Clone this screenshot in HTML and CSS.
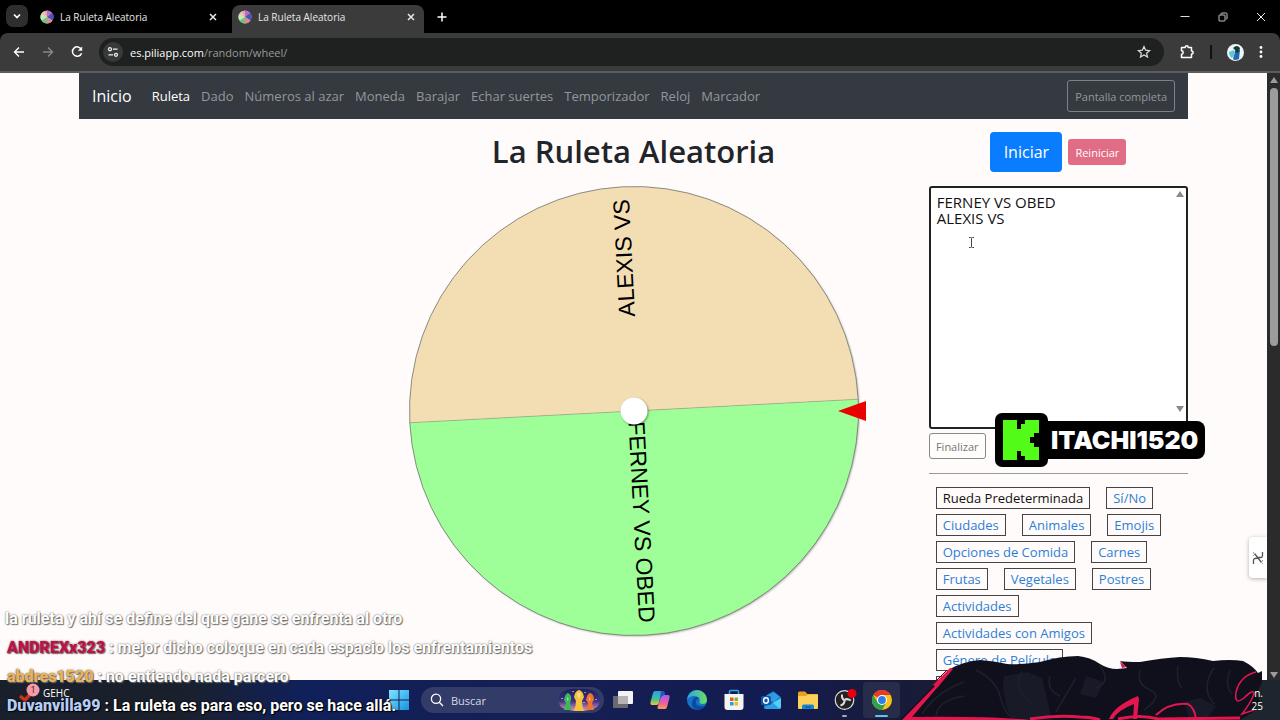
FILE: index.html
```
<!DOCTYPE html>
<html lang="es">
<head>
    <meta charset="UTF-8">
    <meta name="viewport" content="width=device-width, initial-scale=1.0">
    <title>La Ruleta Aleatoria</title>
    <link rel="stylesheet" href="styles.css">
</head>
<body>
    <svg width="0" height="0" class="defs">
        <symbol id="i-wheel" viewBox="0 0 14 14">
            <circle cx="7" cy="7" r="6.5" fill="#e9a0c8"/>
            <path d="M7 7 7 .5A6.5 6.5 0 0 1 12 3z" fill="#c06ac8"/>
            <path d="M7 7 12 3A6.5 6.5 0 0 1 12.5 10.500z" fill="#4454c0"/>
            <path d="M7 7 12.500 10.500A6.500 6.500 0 0 1 7 13.500z" fill="#e08a90"/>
            <path d="M7 7V13.500A6.500 6.500 0 0 1 1.500 10.500z" fill="#6cc47c"/>
            <path d="M7 7 1.500 10.500A6.500 6.500 0 0 1 1.500 3.500z" fill="#b8f0b0"/>
            <path d="M7 7 1.500 3.500A6.500 6.500 0 0 1 4 1.200z" fill="#e8c89c"/>
        </symbol>
        <symbol id="i-close" viewBox="0 0 10 10">
            <path d="M2 2 8 8M8 2 2 8" stroke="currentColor" stroke-width="1.500" fill="none"/>
        </symbol>
    </svg>

    <header class="tabstrip">
        <button class="tab-search" aria-label="Buscar pestañas">
            <svg width="10" height="10" viewBox="0 0 10 10"><path d="M2 3.500 5 6.500 8 3.500" fill="none" stroke="#fff" stroke-width="1.700"/></svg>
        </button>
        <div class="tab">
            <svg width="14" height="14"><use href="#i-wheel"/></svg>
            <span>La Ruleta Aleatoria</span>
            <button aria-label="Cerrar"><svg width="10" height="10"><use href="#i-close"/></svg></button>
        </div>
        <div class="tab active">
            <svg width="14" height="14"><use href="#i-wheel"/></svg>
            <span>La Ruleta Aleatoria</span>
            <button aria-label="Cerrar"><svg width="10" height="10"><use href="#i-close"/></svg></button>
        </div>
        <button class="new-tab" aria-label="Nueva pestaña">
            <svg width="12" height="12" viewBox="0 0 12 12"><path d="M6 1.500V10.500M1.500 6H10.500" stroke="#fff" stroke-width="1.500"/></svg>
        </button>
        <div class="window-controls">
            <button aria-label="Minimizar"><svg width="10" height="10" viewBox="0 0 10 10"><path d="M.5 4.500H9.500" stroke="#ddd"/></svg></button>
            <button aria-label="Restaurar"><svg width="10" height="10" viewBox="0 0 10 10"><path d="M1 3.500Q1 3 1.500 3H6.500Q7 3 7 3.500V8.500Q7 9 6.500 9H1.500Q1 9 1 8.500zM3 2.500V2Q3 1 4 1H8Q9 1 9 2V6.500Q9 7 8 7" fill="none" stroke="#ddd" stroke-width=".9"/></svg></button>
            <button aria-label="Cerrar ventana"><svg width="10" height="10" viewBox="0 0 10 10"><path d="M1 1 9 9M9 1 1 9" stroke="#eee"/></svg></button>
        </div>
    </header>

    <div class="toolbar">
        <button aria-label="Atrás"><svg width="14" height="14" viewBox="0 0 14 14"><path d="M12 7H2.500M7 2.500 2.500 7 7 11.500" fill="none" stroke="#fff" stroke-width="1.400"/></svg></button>
        <button aria-label="Adelante"><svg width="14" height="14" viewBox="0 0 14 14"><path d="M2 7H11.500M7 2.500 11.500 7 7 11.500" fill="none" stroke="#888" stroke-width="1.400"/></svg></button>
        <button aria-label="Recargar"><svg width="14" height="14" viewBox="0 0 14 14"><path d="M11.300 4.300A4.700 4.700 0 1 0 11.600 8.200" fill="none" stroke="#fff" stroke-width="1.500"/><path d="M12.200 1.500V5.800H7.900z" fill="#fff"/></svg></button>
        <div class="address">
            <span class="site-info">
                <svg width="12" height="12" viewBox="0 0 12 12"><g fill="none" stroke="#eee" stroke-width="1.300"><circle cx="3" cy="3.200" r="1.500"/><path d="M6 3.200H10.500M1.500 8.800H6"/><circle cx="9" cy="8.800" r="1.500"/></g></svg>
            </span>
            <span class="url">es.piliapp.com<span>/random/wheel/</span></span>
            <svg width="14" height="14" viewBox="0 0 14 14"><path d="M7 1.500 8.600 5.200 12.600 5.600 9.600 8.200 10.500 12.100 7 10 3.500 12.100 4.400 8.200 1.400 5.600 5.400 5.200z" fill="none" stroke="#ddd" stroke-width="1.200"/></svg>
        </div>
        <button class="extensions" aria-label="Extensiones"><svg width="16" height="16" viewBox="0 0 16 16"><path d="M2.500 3.500H6.200Q6.200 1.800 7.700 1.800 9.200 1.800 9.200 3.500H12.500V7Q14.200 7 14.200 8.500 14.200 10 12.500 10V13.500H2.500V10.200Q4.200 10.200 4.200 8.500 4.200 6.800 2.500 6.800z" fill="none" stroke="#fff" stroke-width="1.500" stroke-linejoin="round"/></svg></button>
        <span class="divider"></span>
        <button class="profile" aria-label="Perfil"><svg width="17" height="17" viewBox="0 0 17 17"><circle cx="8.500" cy="8.500" r="8.500" fill="#eef8f8"/><path d="M8 7 13 6 12 15Q8 17 6 15z" fill="#2468b4"/><path d="M6 4Q10 0 13 4L12 8 9 9 8 6z" fill="#123b3a"/><path d="M2 8 7 6 8 10 5 14Q2 12 2 8z" fill="#62c4dc"/></svg></button>
        <button class="menu" aria-label="Menú"><svg width="4" height="14" viewBox="0 0 4 14" fill="#fff"><circle cx="2" cy="2.500" r="1.400"/><circle cx="2" cy="7" r="1.400"/><circle cx="2" cy="11.500" r="1.400"/></svg></button>
    </div>

    <div class="viewport">
        <div class="page">
            <div class="container">
                <nav class="navbar">
                    <a class="brand" href="#">Inicio</a>
                    <a class="current" href="#">Ruleta</a>
                    <a href="#">Dado</a>
                    <a href="#">Números al azar</a>
                    <a href="#">Moneda</a>
                    <a href="#">Barajar</a>
                    <a href="#">Echar suertes</a>
                    <a href="#">Temporizador</a>
                    <a href="#">Reloj</a>
                    <a href="#">Marcador</a>
                    <button class="fullscreen">Pantalla completa</button>
                </nav>

                <div class="row">
                    <main class="wheel-col">
                        <h1>La Ruleta Aleatoria</h1>
                        <svg class="wheel" viewBox="-225 -225 450 450">
                            <circle class="wheel-shadow" r="224"/>
                            <g transform="rotate(-3)">
                                <path d="M-224.500 0A224.500 224.500 0 0 1 224.500 0z" fill="#f3deb3"/>
                                <path d="M-224.500 0A224.500 224.500 0 0 0 224.500 0z" fill="#9eff98"/>
                                <path d="M-224.500 0H224.500" stroke="#9a9a80" stroke-width=".6"/>
                                <circle r="224.500" fill="none" stroke="#777" stroke-width=".8"/>
                                <text transform="rotate(-90)" x="212" y="6" text-anchor="end">ALEXIS VS</text>
                                <text transform="rotate(90)" x="212" y="6" text-anchor="end">FERNEY VS OBED</text>
                            </g>
                            <circle class="hub" r="13.500"/>
                            <path d="M204 0 232 -10V10z" fill="#ea0000"/>
                        </svg>
                    </main>

                    <aside class="side">
                        <div class="actions">
                            <button class="btn-start">Iniciar</button>
                            <button class="btn-reset">Reiniciar</button>
                        </div>
                        <div class="entries">
                            <textarea aria-label="Opciones" spellcheck="false">FERNEY VS OBED
ALEXIS VS</textarea>
                            <i class="arrow up"></i>
                            <i class="arrow down"></i>
                            <svg class="cursor" width="7" height="11" viewBox="0 0 7 11"><path d="M1 .5H2.500Q3.500 .5 3.500 1.500V9.500Q3.500 10.500 2.500 10.500H1M6 .5H4.500Q3.500 .5 3.500 1.500M3.500 9.500Q3.500 10.500 4.500 10.500H6" fill="none" stroke="#444"/></svg>
                        </div>
                        <button class="btn-finish">Finalizar</button>
                        <hr>
                        <div class="tags">
                            <a class="selected" href="#">Rueda Predeterminada</a>
                            <a href="#">Sí/No</a>
                            <a href="#">Ciudades</a>
                            <a href="#">Animales</a>
                            <a href="#">Emojis</a>
                            <a href="#">Opciones de Comida</a>
                            <a href="#">Carnes</a>
                            <a href="#">Frutas</a>
                            <a href="#">Vegetales</a>
                            <a href="#">Postres</a>
                            <a href="#">Actividades</a>
                            <a href="#">Actividades con Amigos</a>
                            <a href="#">Género de Película</a>
                            <span class="tag-next"></span>
                        </div>
                    </aside>
                </div>
            </div>
            <div class="side-widget">
                <svg width="12" height="16" viewBox="0 0 12 16"><path d="M1.500 14V10.500Q1.500 8.500 3 8.500 5 8.500 6 7.500H9Q10.500 7.500 10.500 5.500V2M2.500 3.500 9.500 12.500" fill="none" stroke="#555" stroke-width="1.300"/><path d="M1.500 2V6M10.500 10V14" stroke="#999" stroke-dasharray="1.500 1.500"/></svg>
            </div>
        </div>
        <div class="scrollbar">
            <i class="arrow up"></i>
            <span class="thumb"></span>
            <i class="arrow down"></i>
        </div>
    </div>

    <footer class="taskbar">
        <div class="weather">
            <svg width="24" height="20" viewBox="0 0 24 20"><path d="M2 13 7 17 18 5" fill="none" stroke="#c8351c" stroke-width="3.500"/><circle cx="15" cy="7" r="6.500" fill="#f79aaa"/><text x="15" y="10" text-anchor="middle">1</text></svg>
            <span>GEHC</span>
        </div>
        <div class="apps">
            <button class="start" aria-label="Inicio">
                <svg width="20" height="20" viewBox="0 0 20 20"><defs><linearGradient id="win" x1="0" y1="0" x2="1" y2="1"><stop offset="0" stop-color="#7fe3ff"/><stop offset="1" stop-color="#1593e0"/></linearGradient></defs><path d="M0 0H9.500V9.500H0zM10.500 0H20V9.500H10.500zM0 10.500H9.500V20H0zM10.500 10.500H20V20H10.500z" fill="url(#win)"/></svg>
            </button>
            <label class="search">
                <svg width="14" height="14" viewBox="0 0 14 14"><circle cx="6" cy="5.800" r="4.600" fill="none" stroke="#fff" stroke-width="1.300"/><path d="M9.300 9.300 13 13" stroke="#fff" stroke-width="1.300"/></svg>
                <input type="text" placeholder="Buscar" aria-label="Buscar">
                <svg width="44" height="24" viewBox="0 0 44 24">
                    <defs><linearGradient id="night" x1="0" y1="0" x2="0" y2="1"><stop offset="0" stop-color="#1c2060"/><stop offset=".55" stop-color="#3d3080"/><stop offset="1" stop-color="#e79ac8"/></linearGradient></defs>
                    <path d="M4 5Q10 0 22 1 34 0 40 5 46 12 40 19 34 23 22 23 10 23 4 19-1 12 4 5z" fill="url(#night)"/>
                    <path d="M7 22Q8 18 9 15L7 12Q8 6 11 5 15 7 14 12L13 15Q14 19 15 22z" fill="#3fb85c"/>
                    <path d="M17 23Q19 17 19 13L17 9Q18 3 22 2 26 3 27 9L25 13Q25 18 27 23z" fill="#f5c33c"/>
                    <path d="M29 22Q31 18 31 15L29 12Q30 6 33 5 37 6 37 12L35 15Q36 19 37 22z" fill="#ee7430"/>
                    <path d="M10 9 12 11 10 13zM20 6 22 4 24 6 22 11zM32 9 34 11 32 13z" fill="#fff" opacity=".45"/>
                    <path d="M16 3V4M28 4V5M5 10V11M39 11V12M27 14V15" stroke="#fff"/>
                </svg>
            </label>
            <button class="app" aria-label="Vista de tareas">
                <svg width="22" height="22" viewBox="0 0 22 22"><rect x="6" y="2" width="15" height="13" rx="1" fill="#f3f3f3"/><rect x="1" y="7" width="15" height="12" rx="1" fill="#777" opacity=".85"/><path d="M6 7H16V15H6z" fill="#b4b4b4"/></svg>
            </button>
            <button class="app" aria-label="Copilot">
                <svg width="22" height="22" viewBox="0 0 22 22"><defs><linearGradient id="cp1" x1="0" y1="0" x2="0" y2="1"><stop offset="0" stop-color="#2b9cf0"/><stop offset=".6" stop-color="#42c68a"/><stop offset="1" stop-color="#f3c33a"/></linearGradient><linearGradient id="cp2" x1="0" y1="0" x2="0" y2="1"><stop offset="0" stop-color="#a45cf0"/><stop offset=".6" stop-color="#f0609a"/><stop offset="1" stop-color="#f8a050"/></linearGradient></defs><path d="M6 2H12Q14 2 13.500 4L10 14Q9.500 16 7.500 16H3Q1 16 1.500 13L4 4Q4.500 2 6 2z" fill="url(#cp1)"/><path d="M15 6H19Q21 6 20.500 9L18 18Q17.500 20 16 20H10Q8 20 8.500 18L12 8Q13 6 15 6z" fill="url(#cp2)"/><path d="M12 2H14Q16 2 16 6H15Q13 6 12 8L10 14Z" fill="#2358c4"/></svg>
            </button>
            <button class="app" aria-label="Edge">
                <svg width="22" height="22" viewBox="0 0 22 22"><defs><linearGradient id="eg" x1="0" y1="0" x2="1" y2="0"><stop offset="0" stop-color="#2aa4e8"/><stop offset="1" stop-color="#6be060"/></linearGradient></defs><circle cx="11" cy="11" r="10" fill="#1672c8"/><path d="M1 11A10 10 0 0 1 21 11Q21 15 16.500 15 13 15 13.500 12.500 14.500 11 13 9 11 6.500 7 7 3 7.500 1 11z" fill="url(#eg)"/><path d="M13.300 9.500Q9.500 10 10 14 11 18 18.500 17 16 20.500 11 21 5 19 6 13 7 8 11.500 8 12.500 8.500 13.300 9.500z" fill="#0d4b9c"/></svg>
            </button>
            <button class="app" aria-label="Store">
                <svg width="22" height="22" viewBox="0 0 22 22"><path d="M6.500 6V2.500Q6.500 1.500 7.500 1.500H14.500Q15.500 1.500 15.500 2.500V6" fill="none" stroke="#36a4ea" stroke-width="1.500"/><path d="M1.500 5H20.500V18Q20.500 21 17.500 21H4.500Q1.500 21 1.500 18z" fill="#f4f4f4"/><path d="M7 8.500H10.500V12H7z" fill="#ee5427"/><path d="M11.500 8.500H15V12H11.500z" fill="#7cb82e"/><path d="M7 13H10.500V16.500H7z" fill="#20a0e8"/><path d="M11.500 13H15V16.500H11.500z" fill="#f8b81c"/></svg>
            </button>
            <button class="app" aria-label="Outlook">
                <svg width="22" height="22" viewBox="0 0 22 22"><path d="M4 8 13 2 21 8V18Q21 20 19 20H6Q4 20 4 18z" fill="#1466b8"/><path d="M7 6 14 3 20 8 14 13 7 11z" fill="#2f9be4"/><path d="M21 9V18Q21 20 19 20H6L14 13z" fill="#56cdf4"/><path d="M13 14 20 20H6Q4 20 4 18z" fill="#2aa0e6"/><rect x="1" y="7" width="10" height="9" rx="1.500" fill="#1058ac"/><ellipse cx="6" cy="11.500" rx="2.400" ry="2.700" fill="none" stroke="#fff" stroke-width="1.400"/></svg>
            </button>
            <button class="app" aria-label="Explorador">
                <svg width="22" height="22" viewBox="0 0 22 22"><path d="M1 4Q1 2.500 2.500 2.500H8L10.500 5H20Q21 5 21 6V10H1z" fill="#e8a21e"/><path d="M1 7H9L11 5.500H21V19Q21 20 20 20H2Q1 20 1 19z" fill="#fbd15a"/><path d="M5 20V17Q5 15.500 6.500 15.500H15.500Q17 15.500 17 17V20z" fill="#1787d4"/><path d="M8 18H14" stroke="#0d5ca0" stroke-width="1.300"/></svg>
            </button>
            <button class="app running" aria-label="OBS">
                <svg width="26" height="22" viewBox="0 0 26 22"><circle cx="12.500" cy="11" r="9.300" fill="#222" stroke="#ddd" stroke-width="1.200"/><g fill="none" stroke="#ddd" stroke-width="2"><path d="M12.500 11Q9.500 10 10 5.500"/><path d="M12.500 11Q15 9 18.800 11.500"/><path d="M12.500 11Q13 15 8.500 16.500"/></g><circle cx="20" cy="4.500" r="4.500" fill="#e60012"/></svg>
            </button>
            <button class="app focused" aria-label="Chrome">
                <svg width="22" height="22" viewBox="0 0 22 22"><circle cx="11" cy="11" r="10" fill="#fbc116"/><path d="M11 11 2.300 6A10 10 0 0 1 19.700 6H11z" fill="#e53b2e"/><path d="M2.300 6A10 10 0 0 0 11 21L15.300 13.500 6.700 13.500z" fill="#2fa14c"/><circle cx="11" cy="11" r="5" fill="#fff"/><circle cx="11" cy="11" r="3.900" fill="#2f7de8"/></svg>
            </button>
        </div>
        <div class="clock"><span>n.</span><span>25</span></div>
    </footer>

    <!-- stream overlays -->
    <div class="kick">
        <div class="kick-logo">
            <svg width="36" height="40" viewBox="0 0 36 40"><path d="M0 0H14V9H18V4H22V0H36V13H31V17H27V23H31V27H36V40H22V36H18V31H14V40H0z" fill="#53fc18"/></svg>
        </div>
        <span class="kick-name">ITACHI1520</span>
    </div>

    <div class="chat">
        <p class="rest">la ruleta y ahí se define del que gane se enfrenta al otro</p>
        <p><b class="red">ANDREXx323</b> : mejor dicho coloque en cada espacio los enfrentamientos</p>
        <p><b class="gold">abdres1520</b> : no entiendo nada parcero</p>
        <p class="last"><b class="blue">Duvanvilla99</b> : La ruleta es para eso, pero se hace allá.</p>
    </div>

    <svg class="cape" width="380" height="66" viewBox="0 0 380 66">
        <path d="M0 66 50 15Q62 8 80 6 94 7 107 10 122 11 140 8 160 2 178 2 190 3 200 10 208 15 217 15L227 14 220 7Q226 8 240 8 262 4 280 3 296 3 313 7 330 5 343 7 353 12 358 19L362 17V28L357 39 360 48 353 58 340 66z" fill="#0f101b"/>
        <path d="M104 22 128 18 142 24 152 66H112Q100 40 104 22zM284 48 300 44 316 52 306 66H290zM186 22 204 28 196 44 180 40z" fill="#181a27"/>
        <g fill="none" stroke="#1e202d" stroke-width="1.500">
            <path d="M76 16Q96 26 100 42T112 64M122 18Q112 34 130 48M150 22Q146 36 160 42M200 12Q212 28 196 34M240 16Q236 30 250 36T244 56M278 12Q276 28 282 34M314 14Q300 34 314 50M176 24Q166 40 156 58M330 16Q324 30 332 40"/>
            <path d="M22 60Q36 38 64 28M36 62Q38 46 64 42"/>
        </g>
        <path d="M2 66 35 32 33 31 50 14 53 15 38 33 36 35 12 63Q90 62 130 66z" fill="#e5164f"/>
        <path d="M32 31 47 16" fill="none" stroke="#4a1028"/>
        <path d="M209 65Q214 52 238 42L239 45 237 65H233L234 50Q218 56 213 65zM220 8 227 13 222 14z" fill="#e5164f"/>
        <g fill="none" stroke="#e5164f">
            <path d="M130 65Q156 61 180 63 192 63 200 66M218 65Q240 60 258 65L340 64" stroke-width="3"/>
            <path d="M256 61Q270 48 288 50 295 54 296 66" stroke-width="2"/>
            <path d="M356 18Q340 22 336 38 334 52 344 44 354 34 354 40 350 50 342 60L354 56" stroke-width="1.500"/>
        </g>
    </svg>
</body>
</html>
```
FILE: styles.css
```
* {
    box-sizing: border-box;
}

body {
    margin: 0;
    height: 100vh;
    display: flex;
    flex-direction: column;
    overflow: hidden;
    position: relative;
    background: #000;
    font-family: "Open Sans", "Noto Sans", sans-serif;
    font-size: 13px;
}

button {
    font-family: inherit;
    border: 0;
    padding: 0;
    background: none;
    color: inherit;
}

a {
    text-decoration: none;
}

svg {
    display: block;
    flex: none;
}

.defs {
    position: absolute;
}

/* browser */
.tabstrip {
    height: 33px;
    padding: 5px 0 0 6px;
    display: flex;
    gap: 6px;
    color: #e8e8e8;
    flex: none;
}

.tab-search {
    width: 22px;
    height: 22px;
    border-radius: 7px;
    background: #2e2e2e;
    display: flex;
    align-items: center;
    justify-content: center;
}

.tab {
    width: 192px;
    height: 24px;
    padding: 0 8px 0 6px;
    display: flex;
    align-items: center;
    gap: 6px;
    font-size: 10px;
}

.tab span {
    flex: 1;
}

.tab.active {
    height: 28px;
    padding-bottom: 4px;
    border-radius: 8px 8px 0 0;
    background: #3b3b3b;
}

.new-tab {
    height: 24px;
    padding: 0 6px;
}

.window-controls {
    display: flex;
    margin-left: auto;
}

.window-controls button {
    width: 38px;
    height: 24px;
    display: flex;
    align-items: center;
    justify-content: center;
}

.toolbar {
    height: 40px;
    padding: 0 17px 0 12px;
    display: flex;
    align-items: center;
    gap: 15px;
    background: #3b3b3b;
    border-bottom: 2px solid #5a5d5d;
    border-radius: 8px 8px 0 0;
    flex: none;
}

.address {
    flex: 1;
    height: 28px;
    padding: 0 13px 0 4px;
    border-radius: 14px;
    background: #1f2121;
    display: flex;
    align-items: center;
    gap: 7px;
}

.site-info {
    width: 20px;
    height: 20px;
    border-radius: 50%;
    background: #383a3a;
    display: flex;
    align-items: center;
    justify-content: center;
}

.url {
    flex: 1;
    font-size: 11px;
    color: #fff;
}

.url span {
    color: #999;
}

.divider {
    width: 2px;
    height: 14px;
    background: #111;
}

/* page */
.viewport {
    flex: 1;
    min-height: 0;
    display: flex;
    overflow: hidden;
}

.page {
    flex: 1;
    position: relative;
    overflow: hidden;
    background: #fffbfa;
}

.container {
    max-width: 1109px;
    margin: 0 auto;
}

.navbar {
    height: 46px;
    padding: 0 13px;
    display: flex;
    align-items: center;
    gap: 11px;
    background: #353a40;
}

.navbar a {
    color: #94979a;
}

.navbar .brand {
    margin-right: 9px;
    font-size: 16px;
    color: #fff;
}

.navbar .current {
    color: #fff;
}

.fullscreen {
    margin-left: auto;
    height: 32px;
    padding: 0 7px;
    border: 1px solid #7d8287;
    border-radius: 3px;
    font-size: 11px;
    color: #94979a;
}

.row {
    display: grid;
    grid-template-columns: 1fr 2fr 1fr;
}

.wheel-col {
    grid-column: 2;
}

h1 {
    margin: 8px 0 11px;
    font-size: 31px;
    line-height: 48px;
    font-weight: 600;
    text-align: center;
    color: #212529;
}

.wheel {
    width: 100%;
    max-width: 450px;
    margin: 0 auto;
    overflow: visible;
}

.wheel text {
    font-family: "Liberation Sans", Arial, sans-serif;
    font-size: 23px;
}

.wheel-shadow {
    fill: #888;
    filter: drop-shadow(1px 1px 1px rgba(0, 0, 0, 0.4));
}

.hub {
    fill: #fff;
    filter: drop-shadow(1px 1px 1px rgba(0, 0, 0, 0.4));
}

.side {
    padding: 13px 0 0 18px;
}

.actions {
    display: flex;
    align-items: center;
    justify-content: center;
    gap: 6px;
}

.btn-start {
    width: 72px;
    height: 40px;
    border-radius: 4px;
    background: #0a7cff;
    color: #fff;
    font-size: 16px;
}

.btn-reset {
    width: 58px;
    height: 26px;
    border-radius: 3px;
    background: #e06c85;
    color: #fff;
    font-size: 11px;
}

.entries {
    position: relative;
    margin-top: 14px;
}

.entries textarea {
    display: block;
    width: 100%;
    height: 243px;
    padding: 6px;
    border: 2px solid #222;
    border-radius: 3px;
    outline: 0;
    resize: none;
    overflow: hidden;
    background: #fff;
    color: #111;
    font-family: inherit;
    font-size: 15px;
    line-height: 16px;
}

.arrow {
    border: 4px solid transparent;
}

.arrow.up {
    border-top: 0;
    border-bottom: 6px solid #8a8a8a;
}

.arrow.down {
    border-bottom: 0;
    border-top: 6px solid #8a8a8a;
}

.entries .arrow {
    position: absolute;
    right: 4px;
}

.entries .up {
    top: 5px;
}

.entries .down {
    bottom: 17px;
}

.cursor {
    position: absolute;
    left: 39px;
    top: 51px;
}

.btn-finish {
    display: block;
    width: 57px;
    height: 26px;
    margin-top: 4px;
    border: 1px solid #888;
    border-radius: 3px;
    background: #fffdfc;
    color: #777;
    font-size: 11px;
}

hr {
    margin: 14px 0 13px;
    border: 0;
    border-top: 1px solid #999;
}

.tags {
    display: flex;
    flex-wrap: wrap;
    gap: 5px 16px;
    padding: 0 8px 0 7px;
}

.tags a,
.tag-next {
    height: 22px;
    padding: 0 6px;
    border: 1px solid #444;
    line-height: 20px;
    color: #2c7fd8;
    white-space: nowrap;
}

.tag-next {
    width: 118px;
}

.tags .selected {
    color: #111;
}

.side-widget {
    position: absolute;
    right: 0;
    top: 464px;
    width: 18px;
    height: 41px;
    display: flex;
    align-items: center;
    justify-content: center;
    background: #fff;
    border-radius: 4px 0 0 4px;
    box-shadow: 0 1px 4px rgba(0, 0, 0, 0.3);
}

.scrollbar {
    width: 13px;
    padding: 4px 0 2px;
    display: flex;
    flex-direction: column;
    align-items: center;
    background: #2b2b2b;
}

.scrollbar .arrow.up {
    border-bottom-color: #9c9c9c;
}

.scrollbar .arrow.down {
    border-top-color: #9c9c9c;
}

.thumb {
    width: 8px;
    height: 43%;
    margin: 5px 0 auto;
    border-radius: 4px;
    background: #9c9c9c;
}

/* taskbar */
.taskbar {
    height: 40px;
    flex: none;
    display: grid;
    grid-template-columns: 1fr auto 1fr;
    align-items: center;
    background: linear-gradient(90deg, #1a202b 0, #1a202b 14%, #10205a 24%, #161f52 45%, #131c52 60%, #181b38 70%, #1f252e 98%);
    color: #fff;
}

.weather {
    display: flex;
    gap: 1px;
    padding: 0 0 14px 18px;
    align-items: center;
    font-size: 10px;
}

.weather text {
    font-size: 9px;
    fill: #222;
}

.apps {
    display: flex;
    align-items: center;
    padding-left: 9px;
}

.start {
    width: 32px;
}

.search {
    width: 183px;
    height: 26px;
    padding: 0 3px 0 9px;
    display: flex;
    align-items: center;
    gap: 7px;
    border-radius: 13px;
    background: #333c69;
}

.search input {
    flex: 1;
    min-width: 0;
    padding: 0;
    border: 0;
    background: none;
    font-family: inherit;
    font-size: 11px;
    color: #fff;
}

.search input::placeholder {
    color: #d6d8e4;
}

.app {
    width: 37px;
    height: 36px;
    display: flex;
    align-items: center;
    justify-content: center;
    position: relative;
    border-radius: 4px;
}

.running::after,
.focused::after {
    content: "";
    position: absolute;
    bottom: 1px;
    width: 5px;
    height: 2px;
    border-radius: 1px;
    background: #a5a8b4;
}

.focused {
    background: #272c4a;
}

.focused::after {
    width: 13px;
    background: #5fc2f5;
}

.clock {
    padding-right: 17px;
    display: flex;
    flex-direction: column;
    align-items: flex-end;
    font-size: 10px;
    line-height: 13px;
}

/* stream overlays */
.kick {
    position: absolute;
    left: 995px;
    top: 413px;
    display: flex;
    align-items: center;
}

.kick-logo {
    padding: 7px 9px 7px 8px;
    border-radius: 7px;
    background: #000;
}

.kick-name {
    height: 38px;
    margin-left: -7px;
    padding: 0 7px 0 10px;
    border-radius: 0 8px 8px 0;
    background: #000;
    color: #fff;
    font-family: Inter, sans-serif;
    font-size: 25px;
    font-weight: 900;
    line-height: 38px;
}

.chat {
    position: absolute;
    left: 7px;
    bottom: 0;
    font-family: Roboto, sans-serif;
    font-size: 16px;
    font-weight: 700;
    line-height: 29px;
    color: #fff;
    text-shadow: 0 0 2px #555, 1px 1px 1px #777;
    white-space: nowrap;
}

.chat p {
    margin: 0;
}

.chat .rest {
    margin-left: -2px;
}

.chat .last {
    text-shadow: 0 0 2px #000, 1px 1px 1px #000;
}

.chat .red {
    color: #c01048;
}

.chat .gold {
    color: #eab35a;
}

.chat .blue {
    color: #b4cdf4;
}

/* drawn over the chat row, the taskbar clock stays readable */
.cape {
    position: absolute;
    right: 0;
    bottom: 0;
}

.clock {
    position: relative;
    z-index: 1;
}
```
